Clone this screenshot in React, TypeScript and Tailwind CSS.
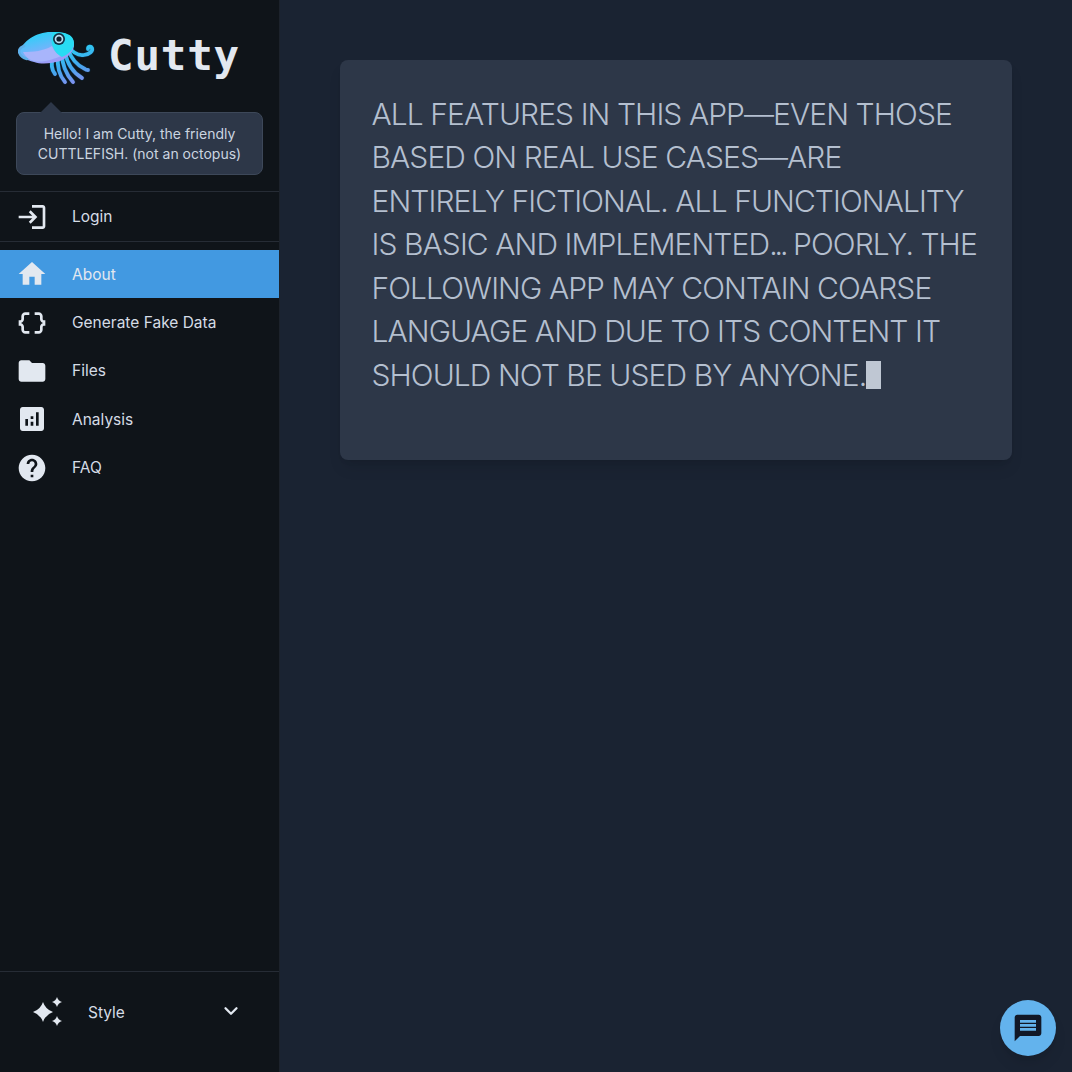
import { MdAnalytics, MdDataObject, MdFolder, MdHelp, MdHome, MdLogin, MdMessage } from 'react-icons/md'
import { FiChevronDown } from 'react-icons/fi'

const navItems = [
  { label: 'About', icon: <MdHome size={32} />, active: true },
  { label: 'Generate Fake Data', icon: <MdDataObject size={32} /> },
  { label: 'Files', icon: <MdFolder size={32} /> },
  { label: 'Analysis', icon: <MdAnalytics size={32} /> },
  { label: 'FAQ', icon: <MdHelp size={32} /> },
]

const armPaths = [
  'M50 18c5 7 10 10 16 9 6-1 9-4 8-7-1-2-4-2-4 1',
  'M50 21c3 9 8 16 17 20 1 1 2 1 3 1',
  'M47 24c2 11 7 20 17 26',
  'M44 26c0 11 4 20 11 28',
  'M40 28c-1 10 1 19 7 26',
  'M35 30c-2 6-2 11 2 16',
]

function CuttleLogo() {
  return (
    <svg width="80" height="60" viewBox="0 0 80 60" fill="none">
      <defs>
        <linearGradient id="body" x1="14" y1="4" x2="22" y2="36" gradientUnits="userSpaceOnUse">
          <stop offset="0" stopColor="#21d4f7" />
          <stop offset="0.6" stopColor="#72b4fb" />
          <stop offset="1" stopColor="#9d9cf8" />
        </linearGradient>
        <linearGradient id="arm" x1="44" y1="12" x2="56" y2="56" gradientUnits="userSpaceOnUse">
          <stop offset="0" stopColor="#1fe0f5" />
          <stop offset="0.65" stopColor="#45a5ee" />
          <stop offset="1" stopColor="#8490f0" />
        </linearGradient>
      </defs>
      <g stroke="#0b2a3f" strokeWidth="5.200" strokeLinecap="round" opacity="0.7">
        {armPaths.map((d) => (
          <path key={d} d={d} />
        ))}
      </g>
      <g stroke="url(#arm)" strokeWidth="3.800" strokeLinecap="round">
        {armPaths.map((d) => (
          <path key={d} d={d} />
        ))}
      </g>
      <path d="M1 24C5 13 19 3 35 4c10 0 20 2 21 11 1 9-7 15-14 18-8 2-17 4-26 1C8 32 2 29 1 24Z" fill="url(#body)" />
      <path d="M1 24c0-3 2-5 5-6M1 24c1 3 4 6 8 7" stroke="#5fb0ea" strokeWidth="2.600" strokeLinecap="round" />
      <path d="M5 24c10 0 21-1 29-6 2 5 5 8 9 10-7 3-18 7-27 5-5-1-9-5-11-9Z" fill="#a8b5fb" />
      <path d="M35 4c-2 5-2 11 0 15 2 5 5 8 9 10 7-3 12-8 12-14C56 6 46 4 35 4Z" fill="#28dcf3" />
      <circle cx="41" cy="11" r="6" fill="#123247" />
      <circle cx="41" cy="11" r="4.300" fill="#b9dcef" />
      <circle cx="41" cy="11" r="2.600" fill="#10202d" />
    </svg>
  )
}

function Sparkles() {
  return (
    <svg width="32" height="32" viewBox="0 0 32 32" fill="currentColor">
      <path d="M11 6Q13.500 13.500 21 16 13.500 18.500 11 26 8.500 18.500 1 16 8.500 13.500 11 6Z" />
      <path d="M25 1Q26.200 4.800 30 6 26.200 7.200 25 11 23.800 7.200 20 6 23.800 4.800 25 1Z" />
      <path d="M25 20Q26.200 23.800 30 25 26.200 26.200 25 30 23.800 26.200 20 25 23.800 23.800 25 20Z" />
    </svg>
  )
}

export default function App() {
  return (
    <div className="flex h-screen w-full bg-[#1a2332] font-['Inter',sans-serif]">
      <aside className="flex h-full w-[280px] shrink-0 flex-col border-r border-[#1c222b] bg-[#0f1419] text-[#e2e8f0]">
        <div className="flex h-[112px] items-start gap-[10px] pl-[18px] pt-[28px]">
          <CuttleLogo />
          <span className="font-['DejaVu_Sans_Mono',monospace] text-[42.500px] font-bold leading-[56px] tracking-[0.8px]">Cutty</span>
        </div>
        <div className="relative mx-4 rounded-lg border border-[#3d4859] bg-[#2d3748] px-3 py-[10.500px] text-center text-sm leading-[20px] text-[#cbd5e0]">
          <div className="absolute left-[23px] top-[-11px] h-0 w-0 border-x-[11px] border-b-[11px] border-x-transparent border-b-[#2d3748]" />
          Hello! I am Cutty, the friendly CUTTLEFISH. (not an octopus)
        </div>
        <div className="mt-4 flex h-[51px] items-center gap-[24px] border-y border-[#262c35] pl-4 text-[15.500px]">
          <MdLogin size={32} />
          <span className="text-[#d5dce6]">Login</span>
        </div>
        <nav className="mt-2 flex flex-1 flex-col">
          {navItems.map((item) => (
            <div
              key={item.label}
              className={`flex h-[48.350px] items-center gap-[24px] pl-4 text-[15.500px] ${item.active ? 'bg-[#4299e1]' : ''}`}
            >
              {item.icon}
              <span className={item.active ? 'text-[#e2e8f0]' : 'text-[#d5dce6]'}>{item.label}</span>
            </div>
          ))}
        </nav>
        <div className="flex h-[101px] items-start border-t border-[#262c35] pl-[32px] pr-[37px] pt-[24px] text-[15.500px]">
          <Sparkles />
          <span className="ml-[24px] mt-[5px] flex-1 text-[#d5dce6]">Style</span>
          <FiChevronDown size={22} strokeWidth={2.5} className="mt-[4px]" />
        </div>
      </aside>
      <main className="relative flex-1 p-[60px]">
        <div className="h-[400px] rounded-lg bg-[#2d3748] pl-[31.500px] pr-8 pt-[32.500px] text-[30px] font-light leading-[43.500px] tracking-[-0.92px] whitespace-nowrap text-[#b4bfcf] shadow-lg">
          ALL FEATURES IN THIS APP—EVEN THOSE<br />
          BASED ON REAL USE CASES—ARE<br />
          ENTIRELY FICTIONAL. ALL FUNCTIONALITY<br />
          IS BASIC AND IMPLEMENTED<span className="tracking-[-3px]">...</span> POORLY. THE<br />
          FOLLOWING APP MAY CONTAIN COARSE<br />
          LANGUAGE AND DUE TO ITS CONTENT IT<br />
          SHOULD NOT BE USED BY ANYONE.
          <span className="inline-block h-[28px] w-[15px] translate-y-[3px] bg-[#bfc7d3]" />
        </div>
        <button className="absolute bottom-4 right-4 flex h-14 w-14 items-center justify-center rounded-full bg-[#63b3ed] text-[#111827] shadow-lg">
          <MdMessage size={32} />
        </button>
      </main>
    </div>
  )
}
